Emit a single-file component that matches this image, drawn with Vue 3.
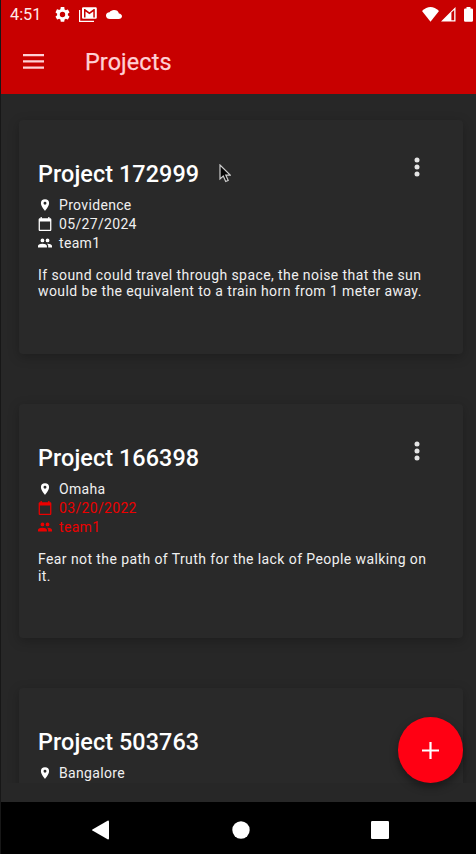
<script setup>
const projects = [
  {
    id: 172999,
    city: 'Providence',
    date: '05/27/2024',
    team: 'team1',
    late: false,
    text: 'If sound could travel through space, the noise that the sun would be the equivalent to a train horn from 1 meter away.',
  },
  {
    id: 166398,
    city: 'Omaha',
    date: '03/20/2022',
    team: 'team1',
    late: true,
    text: 'Fear not the path of Truth for the lack of People walking on it.',
  },
  { id: 503763, city: 'Bangalore', date: '', team: '', late: false, text: '' },
]
</script>

<template>
  <div class="screen">
    <header class="top">
      <div class="status">
        <span class="clock">4:51</span>
        <svg class="gear" viewBox="2 2 20 20"><path fill-rule="evenodd" d="M19.14 12.94c.04-.3.06-.61.06-.94 0-.32-.02-.64-.07-.94l2.03-1.58a.49.49 0 0 0 .12-.61l-1.92-3.32a.49.49 0 0 0-.59-.22l-2.39.96c-.5-.38-1.03-.7-1.62-.94l-.36-2.54A.48.48 0 0 0 13.92 2h-3.84c-.24 0-.43.17-.47.41l-.36 2.54c-.59.24-1.13.57-1.62.94l-2.39-.96a.48.48 0 0 0-.59.22L2.74 8.87c-.12.21-.08.47.12.61l2.03 1.58c-.05.3-.09.63-.09.94s.02.64.07.94l-2.03 1.58a.49.49 0 0 0-.12.61l1.92 3.32c.12.22.37.29.59.22l2.39-.96c.5.38 1.03.7 1.62.94l.36 2.54c.05.24.24.41.48.41h3.84c.24 0 .44-.17.47-.41l.36-2.54c.59-.24 1.13-.56 1.62-.94l2.39.96c.22.08.47 0 .59-.22l1.92-3.32a.48.48 0 0 0-.12-.61zM12 15.6a3.6 3.6 0 1 1 0-7.2 3.6 3.6 0 0 1 0 7.2z" /></svg>
        <svg class="mail" viewBox="0 0 18 15"><path d="M.6 3v11.3H15" fill="none" stroke="#fff" stroke-width="1.2" /><path fill-rule="evenodd" d="M4.2.2h12.4q1.2 0 1.2 1.2v9.2q0 1.2-1.2 1.2H4.2Q3 11.8 3 10.6V1.4Q3 .2 4.2.2zM5 2v8.500h1.500V4.500l3.900 2.700 3.900-2.700v6h1.500V2h-1l-4.400 3.200L6 2z" /></svg>
        <svg class="cloud" viewBox="0 4 24 16" preserveAspectRatio="none"><path d="M19.35 10.04A7.49 7.49 0 0 0 12 4C9.11 4 6.6 5.64 5.35 8.04A5.99 5.99 0 0 0 0 14c0 3.31 2.69 6 6 6h13c2.76 0 5-2.24 5-5 0-2.64-2.05-4.78-4.65-4.96z" /></svg>
        <svg class="wifi" viewBox="0 0 17 15"><path d="M0 4Q8.5-3.8 17 4L8.5 14.7z" /></svg>
        <svg class="signal" viewBox="0 0 15 15"><path fill-rule="evenodd" d="M0 14.5 14.5 0v14.5zM10.4 5.6v7.7h2.8V3z" /></svg>
        <svg class="battery" viewBox="0 0 9 15"><path d="M2.5 0h4v1.4h1.2Q9 1.4 9 2.7v10.8q0 1.3-1.3 1.3H1.3Q0 14.8 0 13.5V2.7q0-1.3 1.3-1.3h1.2z" /></svg>
      </div>
      <div class="bar">
        <svg class="menu" viewBox="0 0 21 15"><path d="M0 0h21v2.2H0zM0 6.3h21v2.2H0zM0 12.5h21v2.2H0z" /></svg>
        <h1>Projects</h1>
      </div>
    </header>

    <main class="list">
      <article v-for="p in projects" :key="p.id" class="card">
        <div class="head">
          <h2>Project {{ p.id }}</h2>
          <svg class="more" viewBox="0 0 6 20"><circle cx="3" cy="3" r="2.5" /><circle cx="3" cy="10" r="2.5" /><circle cx="3" cy="17" r="2.5" /></svg>
        </div>
        <ul class="facts">
          <li>
            <svg viewBox="0 0 24 24"><path fill-rule="evenodd" d="M12 2a7 7 0 0 0-7 7c0 5.25 7 13 7 13s7-7.75 7-13a7 7 0 0 0-7-7zm0 9.5a2.5 2.5 0 1 1 0-5 2.5 2.5 0 0 1 0 5z" /></svg>
            <span>{{ p.city }}</span>
          </li>
          <li v-if="p.date" :class="{ late: p.late }">
            <svg viewBox="1 1 22 22"><path fill-rule="evenodd" d="M20 3h-1V1h-2v2H7V1H5v2H4c-1.100 0-2 .9-2 2v16c0 1.100.9 2 2 2h16c1.100 0 2-.9 2-2V5c0-1.100-.9-2-2-2zm0 18H4V8h16z" /></svg>
            <span>{{ p.date }}</span>
          </li>
          <li v-if="p.team" :class="{ late: p.late }">
            <svg viewBox="1 1 22 22"><path d="M16 11a3 3 0 1 0 0-6 3 3 0 0 0 0 6zm-8 0a3 3 0 1 0 0-6 3 3 0 0 0 0 6zm0 2c-2.330 0-7 1.170-7 3.500V19h14v-2.500C15 14.170 10.330 13 8 13zm8 0c-.29 0-.62.020-.97.050 1.160.84 1.970 1.970 1.970 3.450V19h6v-2.500c0-2.330-4.670-3.500-7-3.500z" /></svg>
            <span>{{ p.team }}</span>
          </li>
        </ul>
        <p>{{ p.text }}</p>
      </article>
    </main>

    <nav class="nav">
      <svg class="back" viewBox="0 0 17 20"><path d="M16 .5q1 0 1 1v17q0 1-1 1L.4 10.600q-.6-.6 0-1.200z" /></svg>
      <svg class="home" viewBox="0 0 18 18"><circle cx="9" cy="9" r="8.700" /></svg>
      <svg class="recent" viewBox="0 0 18 18"><rect width="18" height="18" rx="1.300" /></svg>
    </nav>

    <button class="fab" aria-label="Add project">
      <svg viewBox="0 0 17 17"><path d="M7.400 0h2.200v7.400H17v2.200H9.600V17H7.400V9.600H0V7.400h7.400z" /></svg>
    </button>
    <svg class="cursor" viewBox="0 0 12 19"><path d="M1 1v14l3.300-3 2.400 5.500 2.500-1.100-2.400-5.300h4.400z" /></svg>
  </div>
</template>

<style>
body {
  background: #272727;
  overflow: hidden;
}
</style>

<style scoped>
.screen {
  position: relative;
  box-sizing: border-box;
  display: flex;
  flex-direction: column;
  width: 476px;
  height: 854px;
  overflow: hidden;
  border-left: 1px solid #171717;
  background: #272727;
  color: #fff;
  font-family: Roboto, sans-serif;
}
svg {
  display: block;
  flex: none;
  fill: currentColor;
}
.top {
  height: 94px;
  flex: none;
  background: #c80000;
}
.status {
  display: flex;
  align-items: center;
  height: 28px;
  padding-left: 9px;
}
.clock {
  width: 45px;
  font-size: 16.3px;
  line-height: 28px;
  padding-top: 2px;
  color: #ffe9e9;
}
.gear { width: 15px; height: 15px; }
.mail { width: 18px; height: 15px; margin-left: 9px; }
.cloud { width: 16px; height: 9px; margin-left: 9px; }
.wifi { width: 17px; height: 15px; margin-left: auto; }
.signal { width: 15px; height: 15px; margin-left: 2px; }
.battery { width: 9px; height: 15px; margin: 0 3px 0 8px; }
.bar {
  display: flex;
  align-items: center;
  height: 66px;
  padding-left: 22px;
  color: #ffd0d5;
}
.menu { width: 21px; height: 15px; }
h1 {
  margin: 2px 0 0 41px;
  font-size: 23.4px;
  font-weight: 400;
  line-height: 30px;
  letter-spacing: 0.1px;
  -webkit-text-stroke: 0.25px currentColor;
}
.list {
  display: flex;
  flex-direction: column;
  gap: 50px;
  height: 689px;
  box-sizing: border-box;
  padding: 26px 13px 0 18px;
  overflow: hidden;
}
.card {
  flex: none;
  box-sizing: border-box;
  height: 234.2px;
  padding: 37px 28px 0 19px;
  border-radius: 4px;
  background: #292929;
  box-shadow: 0 3px 12px rgba(0, 0, 0, 0.24);
}
.head {
  display: flex;
  justify-content: space-between;
  align-items: flex-start;
  height: 38px;
}
h2 {
  margin: 3px 0 0;
  font-size: 23.4px;
  font-weight: 500;
  line-height: 28px;
  letter-spacing: 0.07px;
}
.more {
  width: 6px;
  height: 20px;
  margin-right: 15px;
  color: #e4e4e4;
}
.facts {
  margin: 0;
  padding: 0;
  height: 58px;
  list-style: none;
}
li {
  display: flex;
  align-items: center;
  height: 19.3px;
  font-size: 14px;
  letter-spacing: 0.33px;
  color: #f0f0f0;
}
li svg {
  width: 14px;
  height: 14px;
  color: #fff;
}
li span { margin-left: 7px; }
li.late,
li.late svg { color: #ec0000; }
p {
  margin: 13.9px -4px 0 0;
  font-size: 14px;
  line-height: 16.6px;
  letter-spacing: 0.41px;
  color: #f0f0f0;
}
.nav {
  display: flex;
  align-items: center;
  height: 52px;
  margin-top: 19px;
  padding: 4px 0 0 91px;
  box-sizing: border-box;
  background: #000;
}
.back { width: 17px; height: 20px; }
.home { width: 18px; height: 18px; margin-left: 123px; }
.recent { width: 18px; height: 18px; margin-left: 121px; }
.fab {
  position: absolute;
  right: 12.6px;
  top: 717px;
  display: grid;
  place-items: center;
  width: 65.6px;
  height: 66px;
  padding: 0;
  border: 0;
  border-radius: 50%;
  background: #ff0013;
  color: #fff;
  box-shadow: 0 4px 9px rgba(0, 0, 0, 0.4);
}
.fab svg { width: 17px; height: 17px; }
.cursor {
  position: absolute;
  left: 218px;
  top: 164px;
  width: 12px;
  height: 19px;
  fill: #050505;
  stroke: #ccc;
  stroke-width: 1.2;
}
</style>
